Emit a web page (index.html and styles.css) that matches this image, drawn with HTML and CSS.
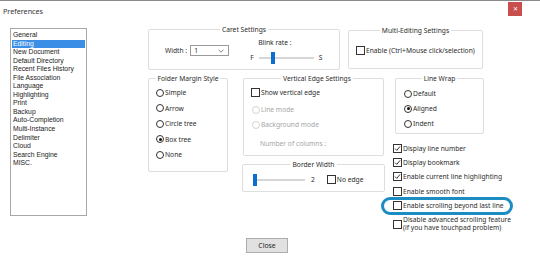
FILE: index.html
```html
<!DOCTYPE html>
<html lang="en">
<head>
    <meta charset="UTF-8">
    <title>Preferences</title>
    <link rel="stylesheet" href="styles.css">
</head>
<body>
<div class="dialog">
    <div class="titlebar">
        <span class="title">Preferences</span>
        <span class="closeX">&#x2715;</span>
    </div>

    <div class="main">
        <ul class="catList">
            <li>General</li>
            <li class="selected">Editing</li>
            <li>New Document</li>
            <li>Default Directory</li>
            <li>Recent Files History</li>
            <li>File Association</li>
            <li>Language</li>
            <li>Highlighting</li>
            <li>Print</li>
            <li>Backup</li>
            <li>Auto-Completion</li>
            <li>Multi-Instance</li>
            <li>Delimiter</li>
            <li>Cloud</li>
            <li>Search Engine</li>
            <li>MISC.</li>
        </ul>

        <div class="panels">
            <div class="row rowTop">
                <div class="group caretGroup">
                    <div class="groupTitle">Caret Settings</div>
                    <div class="caretBody">
                        <span class="widthLabel">Width :</span>
                        <div class="selectBox">
                            <span>1</span>
                            <svg width="6" height="4" viewBox="0 0 6 4"><path d="M0.5 0.8 L3 3.2 L5.5 0.8" fill="none" stroke="#666" stroke-width="0.8"/></svg>
                        </div>
                        <div class="blink">
                            <span class="blinkLabel">Blink rate :</span>
                            <div class="sliderRow">
                                <span>F</span>
                                <div class="slider blinkSlider"><span class="thumb"></span></div>
                                <span>S</span>
                            </div>
                        </div>
                    </div>
                </div>
                <div class="group multiGroup">
                    <div class="groupTitle">Multi-Editing Settings</div>
                    <div class="check"><span class="box"></span>Enable (Ctrl+Mouse click/selection)</div>
                </div>
            </div>

            <div class="row rowBottom">
                <div class="group folderGroup">
                    <div class="groupTitle">Folder Margin Style</div>
                    <div class="radioList folderList">
                        <div class="radio"><span class="dot"></span>Simple</div>
                        <div class="radio"><span class="dot"></span>Arrow</div>
                        <div class="radio"><span class="dot"></span>Circle tree</div>
                        <div class="radio on"><span class="dot"></span>Box tree</div>
                        <div class="radio"><span class="dot"></span>None</div>
                    </div>
                </div>

                <div class="midCol">
                    <div class="group edgeGroup">
                        <div class="groupTitle">Vertical Edge Settings</div>
                        <div class="check"><span class="box"></span>Show vertical edge</div>
                        <div class="radio disabled"><span class="dot"></span>Line mode</div>
                        <div class="radio disabled"><span class="dot"></span>Background mode</div>
                        <div class="columns disabled">Number of columns :</div>
                    </div>
                    <div class="group borderGroup">
                        <div class="groupTitle">Border Width</div>
                        <div class="borderBody">
                            <div class="slider borderSlider"><span class="thumb"></span></div>
                            <span class="borderValue">2</span>
                            <div class="check"><span class="box"></span>No edge</div>
                        </div>
                    </div>
                </div>

                <div class="rightCol">
                    <div class="group wrapGroup">
                        <div class="groupTitle">Line Wrap</div>
                        <div class="radioList wrapList">
                            <div class="radio"><span class="dot"></span>Default</div>
                            <div class="radio on"><span class="dot"></span>Aligned</div>
                            <div class="radio"><span class="dot"></span>Indent</div>
                        </div>
                    </div>
                    <div class="checkList">
                        <div class="check on"><span class="box"></span>Display line number</div>
                        <div class="check on"><span class="box"></span>Display bookmark</div>
                        <div class="check on"><span class="box"></span>Enable current line highlighting</div>
                        <div class="check"><span class="box"></span>Enable smooth font</div>
                        <div class="check marked"><span class="box"></span>Enable scrolling beyond last line<span class="highlight"></span></div>
                        <div class="check twoLine"><span class="box"></span><span>Disable advanced scrolling feature<br>(if you have touchpad problem)</span></div>
                    </div>
                </div>
            </div>
        </div>
    </div>

    <div class="footer">
        <button class="closeBtn">Close</button>
    </div>
</div>
</body>
</html>
```

FILE: styles.css
```css
body{
    margin: 0;
    background: #fff;
    font-family: "Noto Sans", "Open Sans", sans-serif;
    font-size: 6.7px;
    line-height: 9px;
    color: #2b2b2b;
}

.dialog{
    width: 540px;
    height: 260px;
    overflow: hidden;
}

/* title bar */
.titlebar{
    height: 19px;
    border-top: 1px solid #8a8a8a;
    display: flex;
    align-items: center;
    justify-content: space-between;
    padding-left: 3px;
}
.title{
    font-size: 7.2px;
    color: #333;
    margin-top: 1px;
}
.closeX{
    width: 14px;
    height: 14px;
    margin-right: 18px;
    margin-top: -4px;
    background: #c94f4f;
    color: #fff;
    font-size: 6px;
    line-height: 14px;
    text-align: center;
}

.main{
    display: flex;
    height: 212px;
    padding-top: 8px;
    box-sizing: border-box;
}

/* category list */
.catList{
    list-style: none;
    margin: 0 0 0 10px;
    padding: 2px 1px 0;
    width: 77px;
    height: 188px;
    box-sizing: border-box;
    border: 1px solid #a8a8a8;
    font-family: "Liberation Sans", sans-serif;
    font-size: 6.8px;
    line-height: 8.55px;
    color: #222;
}
.catList li{
    padding-left: 1px;
    white-space: nowrap;
}
.catList .selected{
    background: #3a8ee6;
    color: #fff;
}

.panels{
    margin-left: 61px;
    display: flex;
    flex-direction: column;
    gap: 8px;
    padding-top: 1px;
}
.row{
    display: flex;
    align-items: flex-start;
}

/* group box */
.group{
    border: 1px solid #dedede;
    border-radius: 2px;
    box-sizing: border-box;
}
.groupTitle{
    display: table;
    margin: -5px auto 0;
    padding: 0 2px;
    background: #fff;
    line-height: 9px;
}

.caretGroup{
    width: 192px;
    height: 41px;
}
.caretBody{
    display: flex;
    align-items: flex-start;
    padding: 3px 0 0 16px;
}
.widthLabel{
    margin-top: 9px;
}
.selectBox{
    margin: 8px 0 0 3px;
    width: 39px;
    height: 11px;
    box-sizing: border-box;
    border: 1px solid #9a9a9a;
    display: flex;
    align-items: center;
    justify-content: space-between;
    padding: 0 4px 0 3px;
}
.blink{
    margin-left: 21px;
    margin-top: 1px;
    display: flex;
    flex-direction: column;
}
.blinkLabel{
    margin-left: 8px;
}
.sliderRow{
    display: flex;
    align-items: center;
    gap: 5px;
    margin-top: 6px;
}
.slider{
    position: relative;
    height: 2px;
    background: #d6d6d6;
}
.thumb{
    position: absolute;
    top: -5px;
    width: 4px;
    height: 12px;
    background: #0a6fd0;
}
.blinkSlider{
    width: 55px;
}
.blinkSlider .thumb{
    left: 12px;
}

.multiGroup{
    width: 135px;
    height: 39px;
    margin: 1px 0 0 8px;
}
.multiGroup .check{
    margin: 11px 0 0 7px;
}

/* checks and radios */
.check, .radio{
    display: flex;
    align-items: center;
    white-space: nowrap;
}
.box{
    width: 9px;
    height: 9px;
    box-sizing: border-box;
    border: 1px solid #333;
    margin-right: 1px;
    flex-shrink: 0;
    background: #fff;
}
.check.on .box{
    background: #fff url("data:image/svg+xml,%3Csvg xmlns='http://www.w3.org/2000/svg' viewBox='0 0 7 7'%3E%3Cpath d='M1 3.6 L2.8 5.4 L6 1.4' fill='none' stroke='%23222' stroke-width='0.9'/%3E%3C/svg%3E") center/7px 7px no-repeat;
}
.dot{
    width: 8px;
    height: 8px;
    box-sizing: border-box;
    border: 1px solid #333;
    border-radius: 50%;
    margin-right: 1px;
    flex-shrink: 0;
    position: relative;
}
.radio.on .dot:after{
    content: '';
    position: absolute;
    left: 1.5px;
    top: 1.5px;
    width: 3px;
    height: 3px;
    border-radius: 50%;
    background: #111;
}
.disabled{
    color: #a6a6a6;
}
.radio.disabled .dot{
    border-color: #d4d4d4;
}

.folderGroup{
    width: 80px;
    height: 94px;
}
.radioList{
    display: flex;
    flex-direction: column;
}
.folderList{
    padding: 5px 0 0 7px;
    gap: 6.6px;
}

.midCol{
    margin-left: 15px;
    display: flex;
    flex-direction: column;
    gap: 8px;
}
.edgeGroup{
    width: 141px;
    height: 78px;
    padding-left: 7px;
}
.edgeGroup .check{
    margin-top: 5px;
}
.edgeGroup .radio{
    margin: 8px 0 0 1px;
}
.edgeGroup .radio + .radio{
    margin-top: 6px;
}
.columns{
    margin: 10px 0 0 9px;
}
.borderGroup{
    width: 143px;
    height: 28px;
    margin-left: -1px;
}
.borderBody{
    display: flex;
    align-items: center;
    padding: 6px 0 0 10px;
}
.borderSlider{
    width: 52px;
}
.borderSlider .thumb{
    left: 0;
}
.borderValue{
    margin-left: 6px;
}
.borderBody .check{
    margin-left: 12px;
}

.rightCol{
    margin-left: 10px;
    display: flex;
    flex-direction: column;
}
.wrapGroup{
    width: 89px;
    height: 56px;
}
.wrapList{
    padding: 6px 0 0 8px;
    gap: 6px;
}
.checkList{
    margin: 7px 0 0 -2px;
    display: flex;
    flex-direction: column;
}
.checkList .check{
    height: 14.4px;
}
.checkList .twoLine{
    height: auto;
    margin-top: 3px;
    line-height: 8.5px;
}
.marked{
    position: relative;
}
.highlight{
    position: absolute;
    left: -12px;
    top: -2px;
    width: 132px;
    height: 18px;
    box-sizing: border-box;
    border: 3px solid #1b8dc2;
    border-radius: 9px;
}

/* footer */
.footer{
    display: flex;
    justify-content: center;
    padding: 6px 6px 0 0;
}
.closeBtn{
    width: 42px;
    height: 15px;
    padding: 0;
    border: 1px solid #adadad;
    background: #e1e1e1;
    font-family: "Noto Sans", sans-serif;
    font-size: 6.8px;
    color: #222;
}
```
